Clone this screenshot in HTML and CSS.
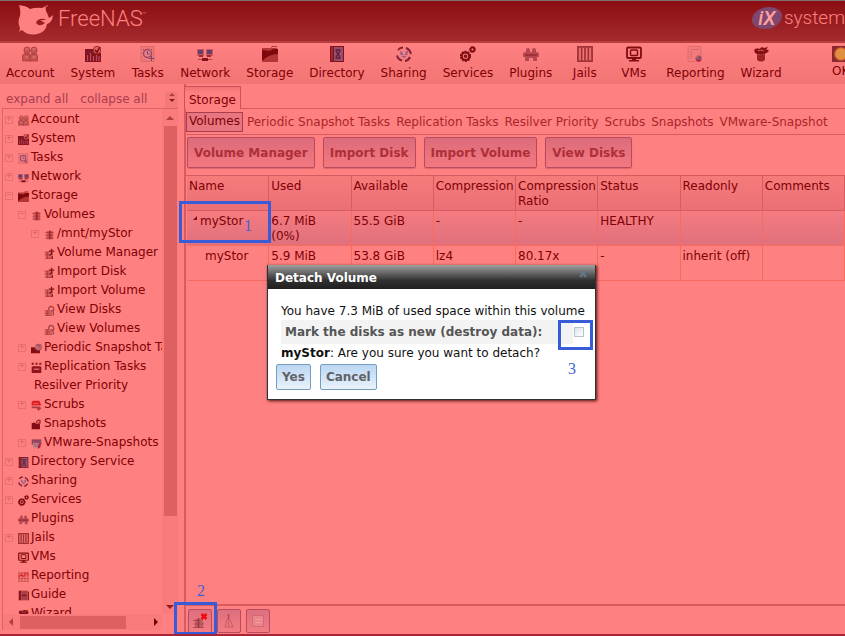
FILE: index.html
```html
<!DOCTYPE html>
<html lang="en">
<head>
<meta charset="utf-8">
<title>FreeNAS - Storage</title>
<link rel="stylesheet" href="styles.css">
</head>
<body>
<svg class="defs" aria-hidden="true">
  <symbol id="account" viewBox="0 0 16 16"><g fill="#c55252" stroke="#a83838" stroke-width=".7"><rect x="2" y="1" width="6" height="7" rx="3"/><rect x="9" y="1" width="6" height="7" rx="3"/><path d="M.5 15V10q0-2 2-2h4q2 0 2 2v5z"/><path d="M8 15v-5q0-2 2-2h3q2.500 0 2.500 2v5z"/></g><path d="M3.500 3h3M10.500 3h3M3 11h3M10.500 11h3" stroke="#ed8080"/></symbol>
  <symbol id="system" viewBox="0 0 16 16"><path fill="#87111b" d="M0 3h10l6 4v9H0z"/><path d="M2.500 15V9M5.500 15V7M8.500 15v-5M11.500 15V9M14 15V10" stroke="#b74c60" stroke-width="1.2"/><path d="M0 8l4-3 4 2 4-3" stroke="#6c2650" fill="none"/><circle cx="12" cy="4" r="3.7" fill="#db6464" stroke="#9f2a2a"/><path d="M10 4l2 2 3-5" stroke="#790000" fill="none" stroke-width="1.4"/></symbol>
  <symbol id="tasks" viewBox="0 0 16 16"><path d="M1 .5h13v15H1z" fill="#ee7777" stroke="#d96a6c"/><circle cx="7.5" cy="7.500" r="4" fill="#e58088" stroke="#a5455f" stroke-width="1.5"/><path d="M7.500 5v3h2M4 3L3 4M11 3l1 1M11.500 10v5M9 12.500h5" stroke="#77476f" fill="none"/></symbol>
  <symbol id="network" viewBox="0 0 16 16"><path fill="#c65a5f" d="M0 3h7v7H0zM9 3h7v7H9z"/><path fill="#673d6b" d="M1 4h5v4H1zM10 4h5v4h-5z"/><path fill="#9a2c33" d="M2 9h4v2H2zM10 9h4v2h-4z"/><path fill="#85131b" d="M5 12h6v3H5z"/><path d="M1 13.500h4M11 13.500h4" stroke="#b04249"/></symbol>
  <symbol id="storage" viewBox="0 0 16 16"><path fill="#b63636" d="M0 2h9l1-2h5v3h1v13H0z"/><path fill="#7e080c" d="M0 15V4l8 1 3-2h5v5q-9 0-16 7"/><path stroke="#f08080" d="M10 1.500h5" fill="none"/></symbol>
  <symbol id="directory" viewBox="0 0 16 16"><path fill="#86101a" d="M1 0h14v16H1z"/><path fill="#94506a" d="M5 1h9v14H5z"/><path d="M3 1v14" stroke="#b04040"/><path d="M6.500 4h5M6.500 12h5M7 5l4 6M11 5l-4 6" stroke="#5f1839" stroke-width="1.3" fill="none"/></symbol>
  <symbol id="sharing" viewBox="0 0 16 16"><g fill="none" stroke="#822135" stroke-width="2"><path d="M2 4Q4 1.500 7 1.500M10 2q4 1.500 5 6M14 11q-1.500 3.500-5 4M6 14.500q-4-1-5-5"/></g><path fill="#a05a7c" d="M4 5l4 2 4-3-1 6-3 2-3-2z"/><circle cx="8" cy="7" r="1.500" fill="#e98c9b"/><path d="M5 10l3-1 3 1" stroke="#e98c9b" fill="none"/></symbol>
  <symbol id="services" viewBox="0 0 16 16"><g fill="none" stroke="#7f0d14"><circle cx="5.500" cy="10.300" r="3.800" stroke-width="2.200"/><circle cx="5.500" cy="10.300" r="5" stroke-width="1.200" stroke-dasharray="2 1.140"/><circle cx="12.500" cy="3.500" r="2" stroke-width="1.800"/><circle cx="12.500" cy="3.500" r="3" stroke-dasharray="1.300 1"/><circle cx="5.500" cy="10.300" r="1" stroke-width="1.500"/></g></symbol>
  <symbol id="plugins" viewBox="0 0 16 16"><path fill="#b84850" d="M0 8q0-2 3-2V4q0-2 2-2t2 2v2h2V4q0-2 2-2t2 2v2q3 0 3 2v3h-2v4H10v-3H6v3H2v-4H0z"/><path fill="#a02f38" d="M2 8h12v2H2z"/></symbol>
  <symbol id="jails" viewBox="0 0 16 16"><path d="M.8.800h14.400v14.400H.8z" fill="#c44b4b" stroke="#a03236" stroke-width="1.500"/><path stroke="#f07474" stroke-width="1.500" d="M3 2v12M6.300 2v12M9.700 2v12M13 2v12"/><path stroke="#9b3034" stroke-width="1.200" d="M4.600 2v12M8 2v12M11.400 2v12"/></symbol>
  <symbol id="vms" viewBox="0 0 16 16"><rect x="1" y="1.500" width="14" height="10.500" rx="1" fill="none" stroke="#810c10" stroke-width="1.800"/><rect x="4.500" y="4" width="7" height="5.500" rx="1" fill="none" stroke="#810c10" stroke-width="1.500"/><path fill="#810c10" d="M6 12h4v2h3v1.500H3V14h3z"/></symbol>
  <symbol id="reporting" viewBox="0 0 16 16"><path d="M1 .5h13v15H1z" fill="#f27b7b" stroke="#e06c6c"/><path d="M4 3.500h8M4 5v8" stroke="#dd6568" fill="none"/><circle cx="11.500" cy="12.500" r="3" fill="#94487c"/><path d="M11.500 12.500l-3-1 2-2z" fill="#c97b20"/><path d="M9 14h5l-2 2z" fill="#d6141a"/></symbol>
  <symbol id="grid" viewBox="0 0 16 16"><path d="M1.500 1v14M5.800 1v14M10.200 1v14M14.500 1v14M0 3h16M0 7h16M0 11h16M0 15h16" stroke="#b74040"/><path d="M1 9l4-4 3 3 3-5 4 2" stroke="#e5242a" fill="none" stroke-width="1.500"/></symbol>
  <symbol id="wizard" viewBox="0 0 16 16"><path fill="#820f14" d="M1 4q3-3 5-1l3-2 2 1 4-1-2 3q4-1 2 2-7 5-13 1z"/><path fill="#9d2327" d="M4 8q4 2 8 0v6q-4 3-8 0z"/><path d="M5 5l3-1 3 1" stroke="#d75353" fill="none"/></symbol>
  <symbol id="database" viewBox="0 0 16 16"><path d="M4 3h9v12H4z" fill="#cf5252"/><path d="M2 5h12M2 9h12M2 13h12" stroke="#b34141" stroke-width="1.500"/><path d="M8.500 2v13" stroke="#96262a" stroke-width="2"/></symbol>
  <symbol id="diskadd" viewBox="0 0 16 16"><path d="M2 6h11v10H2z" fill="#d96363"/><path d="M1 6h6M1 10h7M2 15h8M5 6v10" stroke="#ac3b3b" stroke-width="1.400"/><path d="M7 4.500h8M11 1v9M8 11l4-3M12 12v4" stroke="#86131a" stroke-width="2"/></symbol>
  <symbol id="diskview" viewBox="0 0 16 16"><path d="M2 8h10v8H2z" fill="#d66060"/><path d="M1 8.500h7M1 12h8M1 15.500h11M5 8v8" stroke="#b14242" stroke-width="1.400"/><path d="M7 8q-1-6 4-6 4 1 3 6l-4 1M13 9l1 6" stroke="#a33d43" fill="none" stroke-width="1.800"/></symbol>
  <symbol id="snapshot" viewBox="0 0 16 16"><path fill="#830d13" d="M1 6l4-1 3 2h5v8H1z"/><path d="M8 6q0-5 5-4v4h-3" stroke="#9e2a2f" fill="none" stroke-width="2"/></symbol>
  <symbol id="periodic" viewBox="0 0 16 16"><path fill="#830d13" d="M0 6h5l3 4h5v5H0z"/><circle cx="11" cy="6" r="4.200" fill="#dd7077" stroke="#a2545f" stroke-width="1.500"/><path d="M9 4h3l-1 4" stroke="#81233c" fill="none"/></symbol>
  <symbol id="replication" viewBox="0 0 16 16"><path d="M1 1h3v3H1zM6.500 1h3v3h-3zM12 1h3v3h-3zM1 7l2-1h10l2 1v9H1z" fill="#8e151b"/><path d="M4 10.500h8" stroke="#e36b6b" stroke-width="2"/></symbol>
  <symbol id="scrubs" viewBox="0 0 16 16"><path fill="#dc1c22" d="M1 3l2-2h9l3 7H1z"/><path fill="#b13c43" d="M1 9h9v3H1zM8 12l4-3 3 3-4 4z"/><path d="M3 5h8M2 8.500h9" stroke="#f27878"/></symbol>
  <symbol id="vmware" viewBox="0 0 16 16"><path fill="#94445e" d="M1 2h14v8H1z"/><path fill="#cd828d" d="M3 7h8v8H3z"/><path d="M4 9h6M4 12h5" stroke="#9a4b67"/><path fill="#a32a31" d="M10 11l4-3v5l-4 3z"/></symbol>
  <symbol id="guide" viewBox="0 0 16 16"><path fill="#8a171e" d="M1 1h4v14H1z"/><path fill="#ac4046" d="M5 1h9v14H5z"/><path d="M15 2v13M6 9l3-2 3 2" stroke="#720a10" fill="none" stroke-width="1.500"/></symbol>
  <symbol id="detach" viewBox="0 0 16 16"><path d="M3 6h8v9H3z" fill="#c55c62"/><path d="M1 7.500h8M2 11h10M1 14.500h11" stroke="#aa484e"/><path d="M6.500 5v10" stroke="#963840" stroke-width="1.500"/><path d="M9.500 1l5 5M14.500 1l-5 5" stroke="#f10810" stroke-width="2.500"/></symbol>
  <symbol id="broom" viewBox="0 0 16 16"><path d="M7.500 1v6" stroke="#b34b57" stroke-width="1.500"/><path d="M6 7h3l3 7H4z" fill="#e8797a" stroke="#cf5a61"/><path d="M7.500 9v4" stroke="#cf5a61"/></symbol>
  <symbol id="sheet" viewBox="0 0 16 16"><path d="M2.500 2.500h11v11h-11z" fill="#ea858b" stroke="#d06a74"/><path d="M5 6.500h7M5 9.500h7" stroke="#f29a9a"/></symbol>
</svg>

<header class="masthead">
  <div class="brand">
    <svg class="fish" viewBox="0 0 36 32" aria-hidden="true"><path fill="#ff8080" d="M1 1q8 1 11 4 6-2 12-1l4-2q-1 4 1 7l2 5q-1 2-4 1-4-1-7 1-3 2-1 4 3 3 8-1l-5-3q7 1 13-5-1 8-6 9-1 8-10 10-9 2-15-4l-2 1-1 2 1-5Q-1 18 2 12 3 6 1 1z"/><circle cx="29" cy="2" r="1" fill="#c94c4c"/></svg>
    <span class="brand-name">FreeNAS<sup>™</sup></span>
  </div>
  <div class="vendor"><span class="vendor-mark">iX</span><span>system</span></div>
</header>

<nav class="toolbar" aria-label="Main">
  <a href="#"><svg><use href="#account"/></svg>Account</a>
  <a href="#"><svg><use href="#system"/></svg>System</a>
  <a href="#"><svg><use href="#tasks"/></svg>Tasks</a>
  <a href="#"><svg><use href="#network"/></svg>Network</a>
  <a href="#"><svg><use href="#storage"/></svg>Storage</a>
  <a href="#"><svg><use href="#directory"/></svg>Directory</a>
  <a href="#"><svg><use href="#sharing"/></svg>Sharing</a>
  <a href="#"><svg><use href="#services"/></svg>Services</a>
  <a href="#"><svg><use href="#plugins"/></svg>Plugins</a>
  <a href="#"><svg><use href="#jails"/></svg>Jails</a>
  <a href="#"><svg><use href="#vms"/></svg>VMs</a>
  <a href="#"><svg><use href="#reporting"/></svg>Reporting</a>
  <a href="#"><svg><use href="#wizard"/></svg>Wizard</a>
  <a href="#" class="alert"><span class="lamp"></span>OK</a>
</nav>

<div class="workspace">
  <aside class="sidebar">
    <div class="tree-tools"><a href="#">expand all</a><a href="#">collapse all</a><span class="spinner"><i class="up"></i><i class="down"></i></span></div>
    <div class="tree-box">
      <ul class="tree">
        <li><div class="row"><button class="tw" aria-label="Expand">+</button><svg><use href="#account"/></svg><a href="#">Account</a></div></li>
        <li><div class="row"><button class="tw" aria-label="Expand">+</button><svg><use href="#system"/></svg><a href="#">System</a></div></li>
        <li><div class="row"><button class="tw" aria-label="Expand">+</button><svg><use href="#tasks"/></svg><a href="#">Tasks</a></div></li>
        <li><div class="row"><button class="tw" aria-label="Expand">+</button><svg><use href="#network"/></svg><a href="#">Network</a></div></li>
        <li><div class="row"><button class="tw" aria-label="Collapse">−</button><svg><use href="#storage"/></svg><a href="#">Storage</a></div>
          <ul>
            <li><div class="row"><button class="tw" aria-label="Collapse">−</button><svg><use href="#database"/></svg><a href="#">Volumes</a></div>
              <ul>
                <li><div class="row"><button class="tw" aria-label="Expand">+</button><svg><use href="#database"/></svg><a href="#">/mnt/myStor</a></div></li>
                <li><div class="row leaf"><svg><use href="#diskadd"/></svg><a href="#">Volume Manager</a></div></li>
                <li><div class="row leaf"><svg><use href="#diskadd"/></svg><a href="#">Import Disk</a></div></li>
                <li><div class="row leaf"><svg><use href="#diskadd"/></svg><a href="#">Import Volume</a></div></li>
                <li><div class="row leaf"><svg><use href="#diskview"/></svg><a href="#">View Disks</a></div></li>
                <li><div class="row leaf"><svg><use href="#diskview"/></svg><a href="#">View Volumes</a></div></li>
              </ul>
            </li>
            <li><div class="row"><button class="tw" aria-label="Expand">+</button><svg><use href="#periodic"/></svg><a href="#">Periodic Snapshot Tasks</a></div></li>
            <li><div class="row"><button class="tw" aria-label="Expand">+</button><svg><use href="#replication"/></svg><a href="#">Replication Tasks</a></div></li>
            <li><div class="row leaf"><a href="#">Resilver Priority</a></div></li>
            <li><div class="row"><button class="tw" aria-label="Expand">+</button><svg><use href="#scrubs"/></svg><a href="#">Scrubs</a></div></li>
            <li><div class="row leaf"><svg><use href="#snapshot"/></svg><a href="#">Snapshots</a></div></li>
            <li><div class="row"><button class="tw" aria-label="Expand">+</button><svg><use href="#vmware"/></svg><a href="#">VMware-Snapshots</a></div></li>
          </ul>
        </li>
        <li><div class="row"><button class="tw" aria-label="Expand">+</button><svg><use href="#directory"/></svg><a href="#">Directory Service</a></div></li>
        <li><div class="row"><button class="tw" aria-label="Expand">+</button><svg><use href="#sharing"/></svg><a href="#">Sharing</a></div></li>
        <li><div class="row"><button class="tw" aria-label="Expand">+</button><svg><use href="#services"/></svg><a href="#">Services</a></div></li>
        <li><div class="row leaf"><svg><use href="#plugins"/></svg><a href="#">Plugins</a></div></li>
        <li><div class="row"><button class="tw" aria-label="Expand">+</button><svg><use href="#jails"/></svg><a href="#">Jails</a></div></li>
        <li><div class="row leaf"><svg><use href="#vms"/></svg><a href="#">VMs</a></div></li>
        <li><div class="row leaf"><svg><use href="#grid"/></svg><a href="#">Reporting</a></div></li>
        <li><div class="row leaf"><svg><use href="#guide"/></svg><a href="#">Guide</a></div></li>
        <li><div class="row leaf"><svg><use href="#wizard"/></svg><a href="#">Wizard</a></div></li>
      </ul>
      <div class="vbar"><i class="up"></i><span class="thumb"></span><i class="down"></i></div>
      <div class="hbar"><i class="left"></i><span class="thumb"></span><i class="right"></i></div>
    </div>
  </aside>

  <main class="content">
    <div class="tabs"><button class="tab">Storage</button></div>
    <div class="subtabs">
      <button class="current">Volumes</button><button>Periodic Snapshot Tasks</button><button>Replication Tasks</button><button>Resilver Priority</button><button>Scrubs</button><button>Snapshots</button><button>VMware-Snapshot</button>
    </div>
    <div class="actions">
      <button>Volume Manager</button><button>Import Disk</button><button>Import Volume</button><button>View Disks</button>
    </div>
    <div class="listing">
      <table>
        <thead><tr><th>Name</th><th>Used</th><th>Available</th><th>Compression</th><th>Compression Ratio</th><th>Status</th><th>Readonly</th><th>Comments</th></tr></thead>
        <tbody>
          <tr class="selected"><td><i class="open"></i>myStor</td><td>6.7 MiB (0%)</td><td>55.5 GiB</td><td>-</td><td>-</td><td>HEALTHY</td><td></td><td></td></tr>
          <tr><td class="child">myStor</td><td>5.9 MiB (0%)</td><td>53.8 GiB</td><td>lz4</td><td>80.17x</td><td>-</td><td>inherit (off)</td><td></td></tr>
        </tbody>
      </table>
    </div>
    <div class="footer">
      <button aria-label="Detach Volume"><svg><use href="#detach"/></svg></button>
      <button aria-label="Scrub Volume"><svg><use href="#broom"/></svg></button>
      <button aria-label="Volume Status"><svg><use href="#sheet"/></svg></button>
    </div>
  </main>
</div>

<section class="dialog" role="dialog" aria-labelledby="dialog-title">
  <header><h2 id="dialog-title">Detach Volume</h2><button class="close" aria-label="Close"><svg viewBox="0 0 8 8"><path d="M1 1l6 6M7 1L1 7"/></svg></button></header>
  <form>
    <p>You have 7.3 MiB of used space within this volume</p>
    <div class="field"><label for="mark-new">Mark the disks as new (destroy data):</label><span class="check"><input type="checkbox" id="mark-new"></span></div>
    <p><b>myStor</b>: Are you sure you want to detach?</p>
    <div class="buttons"><button type="button">Yes</button><button type="button">Cancel</button></div>
  </form>
</section>

<div class="mark mark-1"></div><span class="step step-1">1</span>
<div class="mark mark-2"></div><span class="step step-2">2</span>
<div class="mark mark-3"></div><span class="step step-3">3</span>
</body>
</html>
```
FILE: styles.css
```css
* { box-sizing: border-box; }
body {
  margin: 0;
  height: 100vh;
  display: flex;
  flex-direction: column;
  position: relative;
  overflow: hidden;
  background: #ff8080;
  color: #800006;
  font: 12px/15px "DejaVu Sans", Verdana, sans-serif;
  border-top: 1px solid #7d7070;
  border-bottom: 2px solid #a82436;
}
a { color: inherit; text-decoration: none; }
button { font: inherit; color: inherit; margin: 0; padding: 0; border: 0; background: none; }
ul { list-style: none; margin: 0; padding: 0; }
.defs { position: absolute; width: 0; height: 0; }

.masthead {
  flex: none;
  height: 42px;
  display: flex;
  justify-content: space-between;
  padding-left: 18px;
  background: linear-gradient(#8b0d12, #a42b2d);
  border-bottom: 2px solid #b93d3e;
  color: #ff8080;
}
.brand { display: flex; align-items: flex-start; gap: 4px; }
.fish { width: 36px; height: 32px; margin-top: 3px; }
.brand-name { font: 300 22px/36px Roboto, sans-serif; }
.brand-name sup { font-size: 6px; line-height: 8px; vertical-align: 10px; }
.vendor { display: flex; align-items: center; gap: 2px; height: 34px; font: 300 19px/34px Roboto, sans-serif; }
.vendor-mark {
  width: 30px;
  height: 22px;
  border-radius: 60% 40%;
  background: #80476e;
  color: #ffa0a0;
  text-align: center;
  font: italic 500 20px/22px Roboto, sans-serif;
}

.toolbar {
  flex: none;
  display: flex;
  gap: 16px;
  height: 41px;
  padding: 3px 0 0 6px;
  overflow: hidden;
  background: linear-gradient(#ff8080, #f27474);
}
.toolbar a { display: flex; flex: none; flex-direction: column; align-items: center; gap: 4px; min-width: 33px; }
.toolbar svg { width: 16px; height: 16px; }
.toolbar .alert { min-width: 0; margin-left: auto; margin-right: -5px; align-items: flex-start; gap: 2px; }
.lamp { width: 18px; height: 16px; background: radial-gradient(circle, #df9040 0 40%, #df6625 50%, #8b2731 60%); }

.workspace { flex: 1; min-height: 0; display: grid; grid-template-columns: 184px minmax(0, 1fr); }

.sidebar { display: flex; flex-direction: column; min-height: 0; padding: 0 6px 4px 2px; }
.tree-tools { display: flex; gap: 12px; height: 24px; padding: 8px 0 0 4px; color: #aa3d51; }
.spinner { display: flex; flex-direction: column; align-items: center; gap: 3px; width: 13px; margin-left: auto; padding-top: 1px; background: #f47979; }
.spinner i { border-width: 3px; }
i { display: block; flex: none; width: 0; height: 0; border: 4px solid transparent; }
i.up { border-top: 0; border-bottom-color: #b34040; }
i.down { border-bottom: 0; border-top-color: #941b20; }
i.left { border-left: 0; border-right-color: #b34040; }
i.right { border-right: 0; border-left-color: #700006; }
.tree-box {
  flex: 1;
  min-height: 0;
  display: grid;
  grid-template: minmax(0, 1fr) 16px / minmax(0, 1fr) 16px;
  border: 1px solid #df6363;
  border-width: 1px 0 0 1px;
}
.tree { overflow: hidden; padding: 1px 0 0 2px; }
.tree ul { padding-left: 13px; }
.row { display: flex; align-items: center; height: 19px; white-space: nowrap; }
.row svg { flex: none; width: 11px; height: 11px; margin: 2px 2px 0 5px; }
.leaf { padding-left: 8px; }
.leaf > a:first-child { padding-left: 8px; }
.tw { flex: none; width: 8px; height: 8px; border: 1px solid #e87070; color: #d65858; font-size: 7px; line-height: 5px; text-align: center; }
.vbar, .hbar { display: flex; align-items: center; background: #f97b7b; }
.vbar { flex-direction: column; padding: 7px 0 5px; }
.vbar .thumb { width: 13px; flex: 0 1 390px; margin: 6px 0 auto; background: #de6060; }
.hbar { padding: 0 4px 0 6px; }
.hbar .thumb { width: 106px; height: 13px; margin: 0 auto 0 7px; background: #de6060; }

.content { display: flex; flex-direction: column; min-width: 0; border-left: 2px solid #d95b62; }
.tabs { flex: none; height: 25px; padding-top: 2px; border-bottom: 1px solid #d95b60; }
.tab {
  height: 23px;
  margin-left: -2px;
  padding: 4px 4px 0 4px;
  border: 1px solid #cd5158;
  border-bottom: 0;
  background: linear-gradient(#ee7176, #ff8080 25%);
}
.subtabs { flex: none; display: flex; align-items: center; gap: 6px; height: 26px; border-bottom: 1px solid #d95b60; color: #aa252b; white-space: nowrap; overflow: hidden; }
.subtabs button { padding-top: 1px; }
.subtabs .current { height: 20px; margin-right: -2px; padding: 0 2px; border: 1px solid #ac3b4d; background: #e77681; color: #800006; }
.actions { flex: none; display: flex; gap: 8px; padding: 2px 1px 7px; }
.actions button {
  height: 31px;
  padding: 2px 6px 0;
  border: 1px solid #b94b61;
  border-radius: 2px;
  background: linear-gradient(#dd6b7a, #f37980);
  box-shadow: 0 1px 1px #dc6670;
  color: #ae2f38;
  font-weight: bold;
}
.listing { flex: 1; min-height: 0; border-top: 1px solid #d35b60; padding-left: 1px; }
table { width: 100%; table-layout: fixed; border-collapse: separate; border-spacing: 0; }
th, td { height: 35px; padding: 3px 1px 1px 2px; vertical-align: top; text-align: left; font-weight: normal; }
th { border-right: 1px solid #d85b60; border-bottom: 1px solid #d85b60; background: linear-gradient(#f57b7b, #eb7076); }
td { padding-right: 6px; border-right: 1px solid #f86b61; border-bottom: 1px solid #f86b61; }
.selected { background: linear-gradient(#f47b80, #e0707c); }
td:nth-child(7) { padding-right: 1px; }
.open { display: inline-block; margin: 0 3px 5px 4px; border-width: 0 0 4px 4px; border-bottom-color: #860c15; }
td.child { padding-left: 18px; }
.footer { flex: none; display: flex; gap: 5px; height: 30px; padding: 3px 2px; border-top: 2px solid #d95b60; }
.footer button { width: 24px; height: 24px; padding: 3px; border: 1px solid #b64c62; border-radius: 2px; background: linear-gradient(#dd6f7e, #f47c83); }
.footer svg { display: block; width: 16px; height: 16px; }

.dialog {
  position: absolute;
  left: 267px;
  top: 264px;
  width: 329px;
  background: #fff;
  border: solid #303030;
  border-width: 0 1px 1px;
  box-shadow: 1px 1px 3px #4a1010;
  color: #111;
}
.dialog header { display: flex; justify-content: space-between; height: 24px; padding: 5px 8px 0 7px; background: linear-gradient(#a0a0a0, #303030 65%, #202020); color: #fff; }
.dialog h2 { margin: 0; font-size: 12px; line-height: 16px; }
.close { width: 8px; height: 8px; }
.close svg { display: block; width: 8px; height: 8px; stroke: #64788a; stroke-width: 2; }
.dialog form { padding: 14px 4px 9px 13px; }
.dialog p { margin: 0; line-height: 16px; white-space: nowrap; }
.field { display: flex; align-items: center; height: 24px; margin: 1px 0; color: #555; font-weight: bold; }
.field label { flex: 1; padding-left: 4px; line-height: 24px; background: #f3f3f3; white-space: nowrap; }
.check { display: flex; width: 18px; padding-left: 1px; }
.check input { appearance: none; width: 10px; height: 10px; margin: 0; border: 1px solid #b7c3cc; background: linear-gradient(135deg, #dce5ef, #fff); }
.buttons { display: flex; gap: 9px; margin: 3px 0 0 -5px; }
.buttons button { height: 26px; padding: 0 5px; border: 1px solid #759dc0; border-radius: 2px; background: linear-gradient(#bad6f3, #ebf2fb); color: #5f6368; font-weight: bold; }

.mark { position: absolute; border: 3px solid #385bd7; }
.mark-1 { left: 179px; top: 200px; width: 92px; height: 42px; }
.mark-2 { left: 174px; top: 601px; width: 43px; height: 33px; }
.mark-3 { left: 558px; top: 319px; width: 35px; height: 30px; }
.step { position: absolute; color: #4562d6; font: 16px/16px "Liberation Serif", serif; }
.step-1 { left: 244px; top: 217px; }
.step-2 { left: 197px; top: 582px; }
.step-3 { left: 568px; top: 360px; }
```
